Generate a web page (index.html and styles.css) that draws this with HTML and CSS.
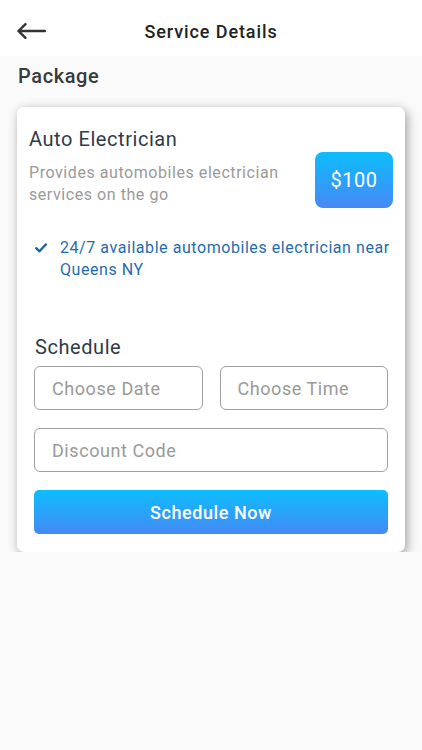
FILE: index.html
```html
<!DOCTYPE html>
<html>
<head>
	<title>Service Details</title>
	<link rel="stylesheet" href="styles.css">
</head>
<body>
	<div class="topbar">
		<svg class="back" width="30" height="16" viewBox="0 0 30 16">
			<path d="M2.5 8 H29 M9.5 1.2 L2.5 8 L9.5 14.8" fill="none" stroke="#333" stroke-width="2.4" stroke-linecap="round" stroke-linejoin="round"/>
		</svg>
		<h1 class="title">Service Details</h1>
	</div>

	<h2 class="section">Package</h2>

	<div class="card">
		<h3 class="name">Auto Electrician</h3>
		<div class="row">
			<p class="desc">Provides automobiles electrician services on the go</p>
			<div class="price">$100</div>
		</div>

		<div class="feature">
			<svg class="check" width="12" height="10" viewBox="0 0 12 10">
				<path d="M1.2 5.2 L4.5 8.3 L10.8 1.5" fill="none" stroke="#1b64a3" stroke-width="2.4" stroke-linecap="round" stroke-linejoin="round"/>
			</svg>
			<span>24/7 available automobiles electrician near Queens NY</span>
		</div>

		<div class="schedule">
			<h3 class="label">Schedule</h3>
			<div class="pair">
				<div class="field">Choose Date</div>
				<div class="field">Choose Time</div>
			</div>
			<div class="field">Discount Code</div>
			<div class="btn">Schedule Now</div>
		</div>
	</div>
</body>
</html>
```

FILE: styles.css
```css
body {
	margin: 0;
	background: #fafafa;
	font-family: Roboto, "Noto Sans", sans-serif;
	letter-spacing: 0.035em;
}

.topbar {
	height: 56px;
	background: #fff;
	display: flex;
	align-items: center;
	justify-content: center;
	position: relative;
}

.back {
	position: absolute;
	left: 16px;
	top: 23px;
}

.title {
	margin: 0;
	font-size: 18px;
	font-weight: 500;
	letter-spacing: 0.05em;
	color: #222;
	padding-top: 6px;
}

.section {
	margin: 8px 0 19px 18px;
	font-size: 20px;
	line-height: 24px;
	font-weight: 500;
	letter-spacing: 0.03em;
	color: #3a3a3a;
}

.card {
	margin: 0 17px;
	background: #fff;
	border-radius: 7px;
	box-shadow: 2px 3px 11px rgba(0, 0, 0, 0.38);
	padding: 20px 12px 18px 12px;
}

.name {
	margin: 0;
	font-size: 20px;
	line-height: 24px;
	font-weight: 400;
	color: #2f3a4a;
}

.row {
	display: flex;
	justify-content: space-between;
	align-items: flex-start;
	margin-top: 1px;
}

.desc {
	margin: 0;
	padding-top: 10px;
	width: 262px;
	font-size: 16px;
	line-height: 22px;
	color: #9a9a9a;
}

.price {
	width: 78px;
	height: 56px;
	border-radius: 8px;
	background: linear-gradient(#0cbdfd, #4789f6);
	color: #fff;
	font-size: 20px;
	display: flex;
	align-items: center;
	justify-content: center;
}

.feature {
	display: flex;
	align-items: flex-start;
	gap: 13px;
	margin-top: 29px;
	padding-left: 6px;
	font-size: 16px;
	line-height: 22px;
	color: #1f6cac;
}

.check {
	margin-top: 6px;
	flex: none;
}

.schedule {
	margin-top: 54px;
	padding: 0 5px;
	display: flex;
	flex-direction: column;
	gap: 18px;
}

.label {
	margin: 0 0 -11px 1px;
	font-size: 20px;
	line-height: 24px;
	font-weight: 400;
	color: #2f3a4a;
}

.pair {
	display: flex;
	gap: 17px;
}

.pair .field {
	flex: 1;
}

.field {
	height: 44px;
	box-sizing: border-box;
	border: 1px solid #a0a0a0;
	border-radius: 6px;
	padding-left: 17px;
	display: flex;
	align-items: center;
	font-size: 18px;
	color: #9a9a9a;
}

.btn {
	height: 44px;
	border-radius: 5px;
	background: linear-gradient(#0dbefe, #4589f6);
	color: #fff;
	font-size: 18px;
	font-weight: 500;
	display: flex;
	align-items: center;
	justify-content: center;
}
```
